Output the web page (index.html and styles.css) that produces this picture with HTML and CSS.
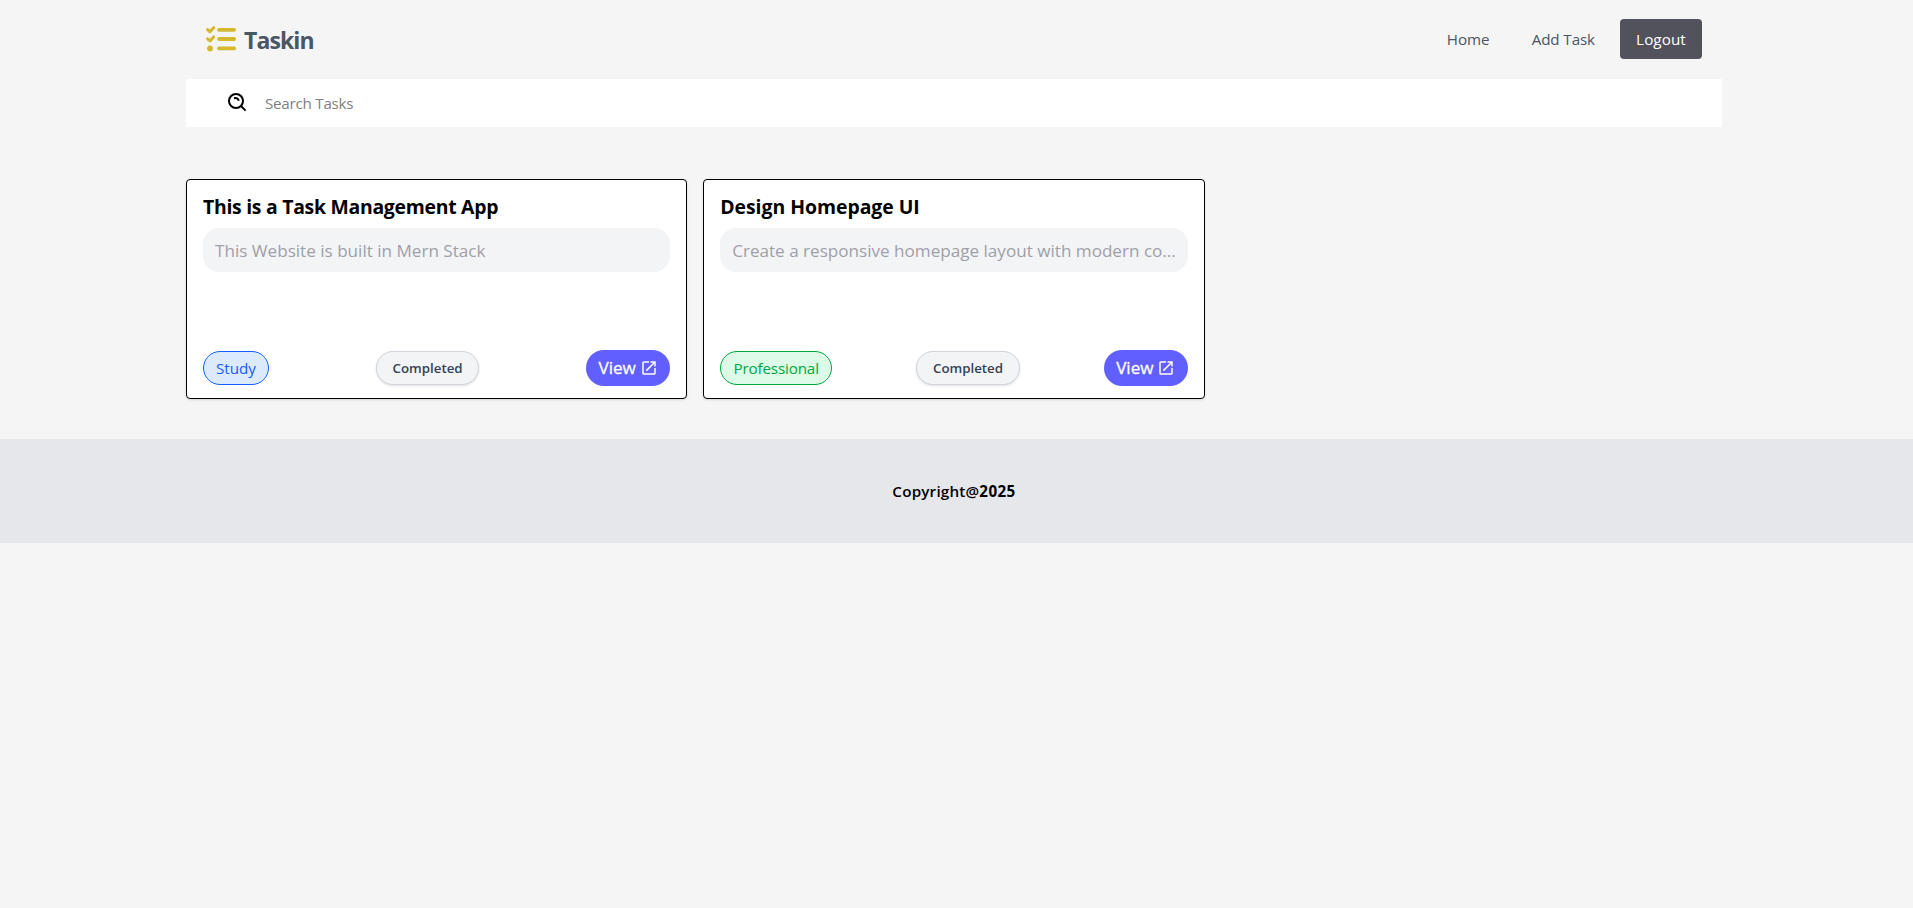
FILE: index.html
```html
<!DOCTYPE html>
<html lang="en">
<head>
<meta charset="utf-8">
<title>Taskin</title>
<link rel="stylesheet" href="styles.css">
</head>
<body>
<div class="container">
  <header class="navbar">
    <a class="brand">
      <svg class="brand-icon" viewBox="0 0 30 26" fill="none" stroke="#d4b82e" stroke-linecap="round" stroke-linejoin="round">
        <path stroke-width="3" d="M1.6 3.6 4 5.8 7.6 1.7M1.6 12.8 4 15 7.6 10.9"/>
        <path stroke-width="3.8" d="M13 3.8H28.1M13 13H28.1M13 22.4H28.1"/>
        <circle cx="4" cy="22.4" r="2.9" fill="#d4b82e" stroke="none"/>
      </svg>
      <span class="brand-name">Taskin</span>
    </a>
    <nav class="links">
      <a class="link home">Home</a>
      <a class="link add">Add Task</a>
      <button class="logout">Logout</button>
    </nav>
  </header>
  <div class="search">
    <svg class="search-icon" viewBox="0 0 20 20" fill="none" stroke="#000" stroke-width="2">
      <circle cx="9" cy="9" r="7"/>
      <path d="M14 14 18.6 18.6"/>
      <path d="M7 6.3Q10.8 5 11.8 8.8"/>
    </svg>
    <input class="search-input" type="text" placeholder="Search Tasks">
  </div>
  <main class="cards">
    <article class="card">
      <h2 class="card-title t1">This is a Task Management App</h2>
      <p class="card-desc">This Website is built in Mern Stack</p>
      <div class="card-foot">
        <span class="tag study">Study</span>
        <span class="status">Completed</span>
        <button class="view">View
          <svg class="view-icon" viewBox="0 0 24 24" fill="currentColor"><path d="M19 19H5V5h7V3H5a2 2 0 0 0-2 2v14a2 2 0 0 0 2 2h14c1.1 0 2-.9 2-2v-7h-2v7zM14 3v2h3.59l-9.83 9.83 1.41 1.41L19 6.41V10h2V3h-7z"/></svg>
        </button>
      </div>
    </article>
    <article class="card">
      <h2 class="card-title t2">Design Homepage UI</h2>
      <p class="card-desc">Create a responsive homepage layout with modern co...</p>
      <div class="card-foot">
        <span class="tag professional">Professional</span>
        <span class="status">Completed</span>
        <button class="view">View
          <svg class="view-icon" viewBox="0 0 24 24" fill="currentColor"><path d="M19 19H5V5h7V3H5a2 2 0 0 0-2 2v14a2 2 0 0 0 2 2h14c1.1 0 2-.9 2-2v-7h-2v7zM14 3v2h3.59l-9.83 9.83 1.41 1.41L19 6.41V10h2V3h-7z"/></svg>
        </button>
      </div>
    </article>
  </main>
</div>
<footer class="footer">
  <p class="copyright">Copyright@<b>2025</b></p>
</footer>
</body>
</html>
```

FILE: styles.css
```css
* { box-sizing: border-box; margin: 0; padding: 0; }
body {
  background: #f5f5f5;
  font-family: "Open Sans", "Noto Sans", sans-serif;
  font-size: 15.2px;
  line-height: 24px;
  color: #000;
}
button, input { font: inherit; border: 0; outline: 0; }
.container { width: 1536px; margin-left: 186px; }
.navbar {
  height: 79px;
  padding: 0 20px 1px;
  display: flex;
  align-items: center;
  justify-content: space-between;
}
.brand { display: flex; align-items: center; gap: 8px; }
.brand-icon { width: 30px; height: 26px; }
.brand-name {
  padding-top: 1px;
  font-size: 23px;
  font-weight: 700;
  line-height: 32px;
  letter-spacing: -.9px;
  color: #4a5565;
}
.links { display: flex; align-items: center; color: #4a5565; }
.home { margin-right: 42px; }
.add { margin-right: 25px; letter-spacing: -.1px; }
.logout {
  width: 82px;
  height: 40px;
  border-radius: 4px;
  background: #52525c;
  color: #fff;
  letter-spacing: .1px;
}
.search {
  height: 48px;
  padding-left: 41px;
  background: #fff;
  display: flex;
  align-items: center;
}
.search-icon { width: 20px; height: 20px; margin: 0 18px 2px 0; }
.search-input { width: 600px; background: transparent; letter-spacing: -.25px; }
.search-input::placeholder { color: #808080; opacity: 1; }
.cards {
  padding: 52px 0 40px;
  display: grid;
  grid-template-columns: repeat(3, 1fr);
  gap: 16px;
}
.card {
  height: 220px;
  padding: 13px 16px 12px;
  background: #fff;
  border: 1px solid #000;
  border-radius: 4px;
  box-shadow: 0 1px 3px rgba(0, 0, 0, .1), 0 1px 2px -1px rgba(0, 0, 0, .1);
  display: flex;
  flex-direction: column;
}
.card-title { font-size: 19.4px; font-weight: 700; line-height: 28px; margin-bottom: 7px; }
.t1 { letter-spacing: -.27px; }
.t2 { letter-spacing: -.02px; }
.card-desc {
  height: 44px;
  padding: 9px 12px 7px;
  border-radius: 16px;
  background: #f3f4f6;
  color: #9f9fa9;
  font-size: 17.1px;
  line-height: 28px;
  white-space: nowrap;
}
.card-foot { margin-top: auto; display: flex; align-items: center; justify-content: space-between; }
.tag, .status, .view {
  display: flex;
  align-items: center;
  justify-content: center;
  border-radius: 18px;
  white-space: nowrap;
}
.tag { height: 34px; border: 1px solid; }
.study { width: 66px; color: #155dfc; background: #dbeafe; }
.professional { width: 112px; color: #00a63e; background: #dcfce7; letter-spacing: -.15px; }
.status {
  width: 103.4px;
  height: 34px;
  border: 1px solid #d1d5dc;
  background: #f3f4f6;
  color: #364153;
  font-size: 13.3px;
  font-weight: 600;
  box-shadow: 0 1px 3px rgba(0, 0, 0, .1), 0 1px 2px -1px rgba(0, 0, 0, .1);
}
.view {
  width: 84px;
  height: 36px;
  gap: 4px;
  background: #615fff;
  color: #fff;
  font-size: 17.1px;
  -webkit-text-stroke: .3px #fff;
}
.view-icon { width: 18px; height: 18px; }
.footer {
  height: 104px;
  padding-right: 5px;
  background: #e5e7eb;
  display: flex;
  align-items: center;
  justify-content: center;
}
.copyright { font-weight: 600; letter-spacing: .2px; }
.copyright b { font-weight: 700; letter-spacing: .4px; }
```
